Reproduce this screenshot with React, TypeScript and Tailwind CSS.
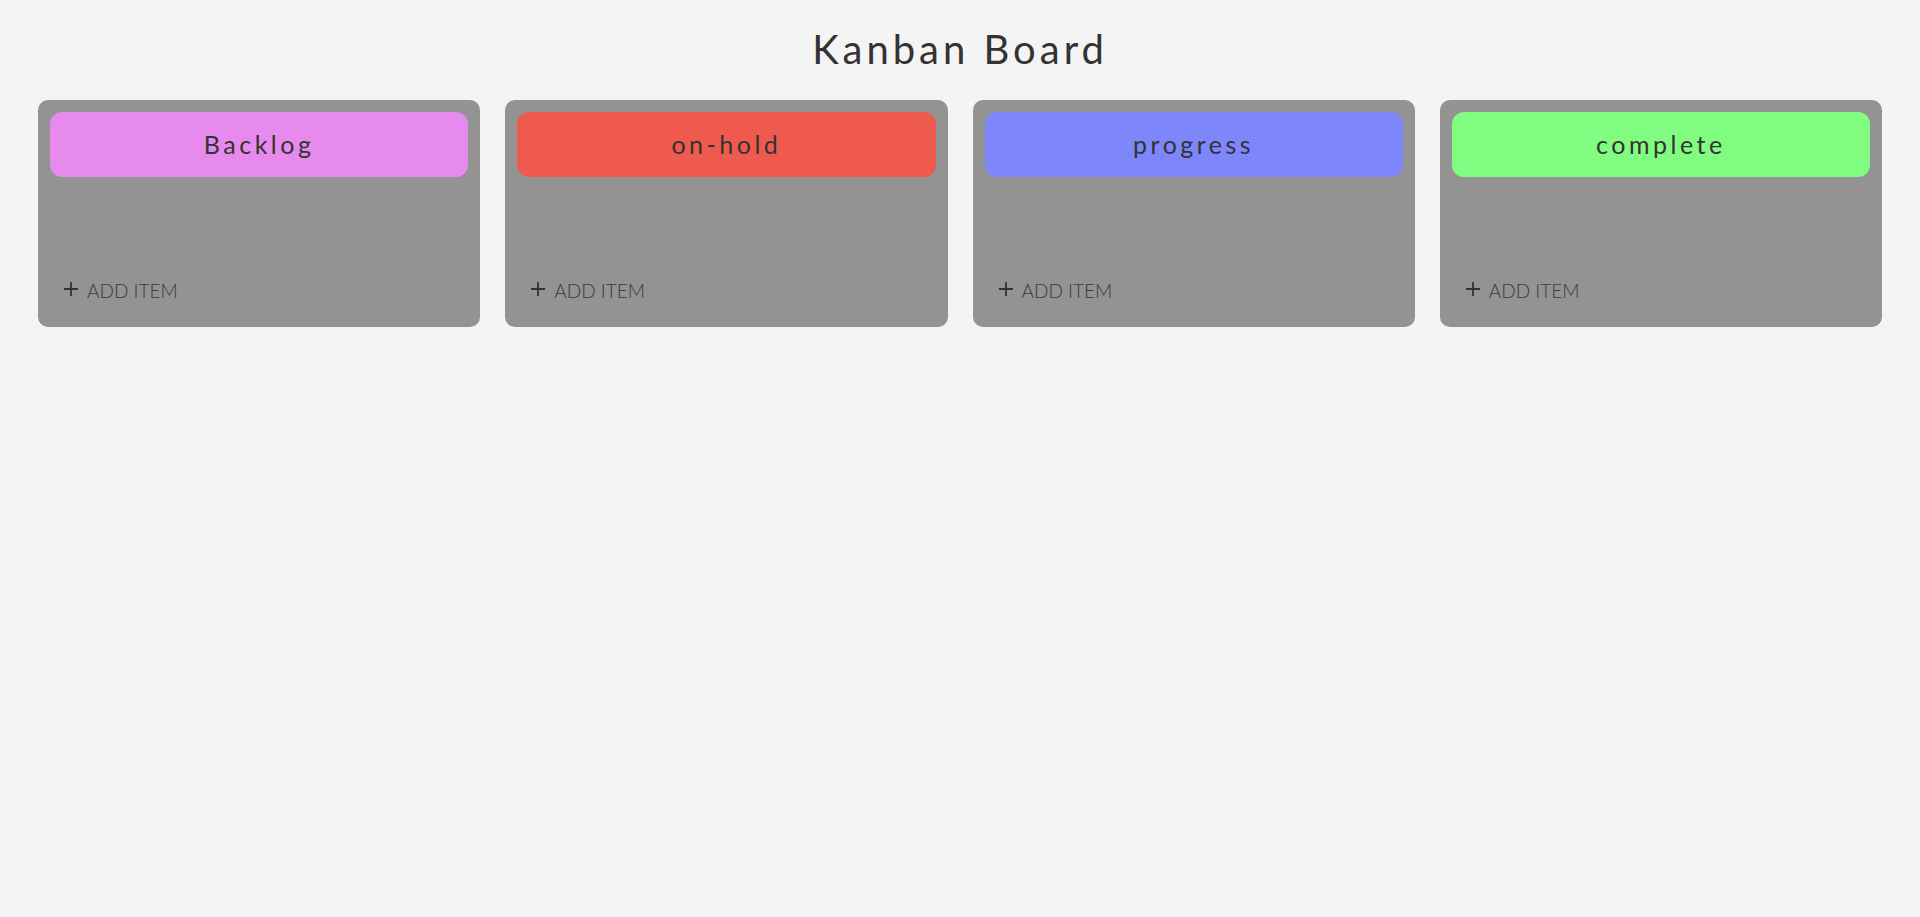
const columns = [
  { name: "Backlog", color: "bg-[#e78aee]" },
  { name: "on-hold", color: "bg-[#ee5b4e]" },
  { name: "progress", color: "bg-[#7e86fc]" },
  { name: "complete", color: "bg-[#80fd80]" },
];

function Column({ name, color }: { name: string; color: string }) {
  return (
    <div className="flex h-[227px] flex-col rounded-[10px] bg-[#939393] p-3">
      <div
        className={`flex h-[65px] items-center justify-center rounded-xl ${color} text-[25px] tracking-[3.5px] text-[#333]`}
      >
        {name}
      </div>
      <div className="flex-1" />
      <button className="mb-[12px] ml-[14px] flex items-center gap-[9px] self-start text-[19px] font-light leading-[24px] text-[#3a3a3a]">
        <svg width="14" height="14" viewBox="0 0 14 14" className="-mt-[4px]">
          <path d="M7 0v14M0 7h14" stroke="#333" strokeWidth="1.8" />
        </svg>
        <span>ADD ITEM</span>
      </button>
    </div>
  );
}

export default function App() {
  return (
    <div className="min-h-screen bg-[#f4f4f4] font-['Lato',sans-serif] text-[#333]">
      <h1 className="pt-[20px] pb-[22px] text-center text-[40px] leading-[58px] tracking-[4px]">
        Kanban Board
      </h1>
      <div className="grid grid-cols-4 gap-[25px] px-[38px]">
        {columns.map((c) => (
          <Column key={c.name} name={c.name} color={c.color} />
        ))}
      </div>
    </div>
  );
}
